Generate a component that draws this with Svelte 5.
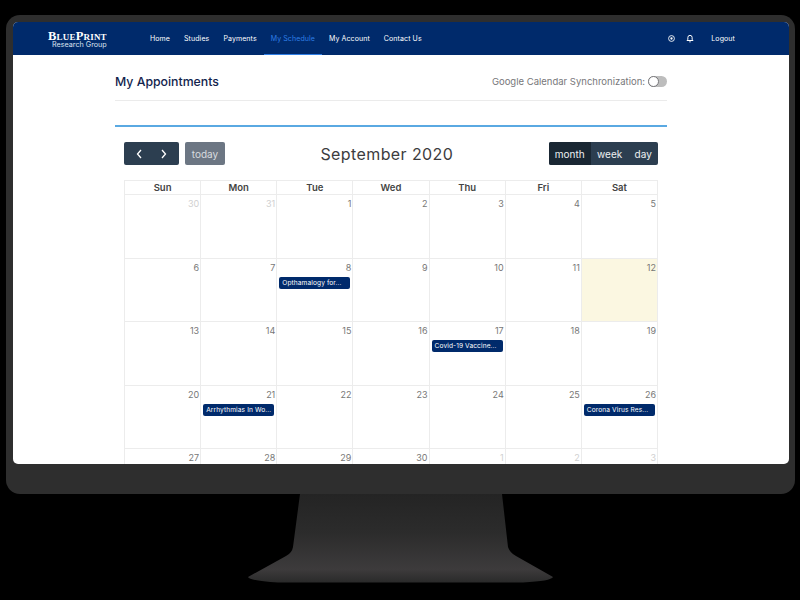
<script>
  const links = ['Home', 'Studies', 'Payments', 'My Schedule', 'My Account', 'Contact Us'];
  const days = ['Sun', 'Mon', 'Tue', 'Wed', 'Thu', 'Fri', 'Sat'];

  const events = {
    8: 'Opthamalogy for...',
    17: 'Covid-19 Vaccine...',
    21: 'Arrhythmias In Wo...',
    26: 'Corona Virus Res...'
  };

  const cells = [
    { n: 30, off: true }, { n: 31, off: true },
    ...Array.from({ length: 30 }, (_, i) => ({ n: i + 1, off: false })),
    { n: 1, off: true }, { n: 2, off: true }, { n: 3, off: true }
  ];
</script>

<div class="page">
  <div class="monitor">
    <div class="screen">
      <header class="nav">
        <div class="logo">
          <span class="logo__top">BluePrint</span>
          <span class="logo__sub">Research Group</span>
        </div>
        <nav class="links">
          {#each links as link}
            <span class="link" class:link--active={link === 'My Schedule'}>{link}</span>
          {/each}
        </nav>
        <div class="tools">
          <svg width="7" height="7" viewBox="0 0 12 12" fill="none" stroke="#fff" stroke-width="1.5">
            <circle cx="6" cy="6" r="5" />
            <circle cx="6" cy="6" r="2" fill="#fff" stroke="none" />
          </svg>
          <svg class="bell" width="8" height="9" viewBox="0 0 12 13" fill="none" stroke="#fff" stroke-width="1.5">
            <path d="M1.5 9.5h9l-1.3-1.8V5a3.2 3.2 0 0 0-6.4 0v2.7z" stroke-linejoin="round" />
            <path d="M5 11.5h2" />
          </svg>
          <span class="logout">Logout</span>
        </div>
      </header>

      <main class="content">
        <div class="head">
          <h1>My Appointments</h1>
          <div class="sync">
            <span>Google Calendar Synchronization:</span>
            <span class="toggle"><span class="toggle__knob"></span></span>
          </div>
        </div>

        <div class="calendar">
          <div class="toolbar">
            <div class="toolbar__left">
              <div class="btn btn--nav">
                <svg width="9" height="10" viewBox="0 0 9 10" fill="none" stroke="#fff" stroke-width="1.3"><path d="M6 1 2.5 5 6 9" /></svg>
                <svg width="9" height="10" viewBox="0 0 9 10" fill="none" stroke="#fff" stroke-width="1.3"><path d="M3 1l3.500 4L3 9" /></svg>
              </div>
              <div class="btn btn--today">today</div>
            </div>
            <h2>September 2020</h2>
            <div class="views">
              <span class="view view--on">month</span>
              <span class="view">week</span>
              <span class="view">day</span>
            </div>
          </div>

          <div class="grid">
            {#each days as day}
              <div class="dow">{day}</div>
            {/each}
            {#each cells as cell}
              <div class="day" class:day--today={cell.n === 12 && !cell.off}>
                <span class="num" class:num--off={cell.off}>{cell.n}</span>
                {#if !cell.off && events[cell.n]}
                  <span class="event">{events[cell.n]}</span>
                {/if}
              </div>
            {/each}
          </div>
        </div>
      </main>
    </div>
  </div>

  <svg class="stand" width="305" height="89" viewBox="0 0 305 89">
    <defs>
      <linearGradient id="standFill" x1="0" y1="0" x2="0" y2="1">
        <stop offset="0" stop-color="#242424" />
        <stop offset="0.45" stop-color="#2c2c2c" />
        <stop offset="0.85" stop-color="#3d3b3c" />
        <stop offset="1" stop-color="#2a2a2a" />
      </linearGradient>
    </defs>
    <path
      d="M52 0 L45 53 Q44 59 38 62 L0 83 Q2 87 30 88.500 L275 88.500 Q303 87 305 83 L268 62 Q262 59 260 53 L254 0 Z"
      fill="url(#standFill)"
    />
  </svg>
</div>

<style>
  :global(body) {
    margin: 0;
    background: #000;
  }

  .page {
    width: 800px;
    height: 600px;
    overflow: hidden;
    background: #000;
    box-sizing: border-box;
    padding: 15px 5px 0 6px;
    display: flex;
    flex-direction: column;
    align-items: center;
    font-family: 'Inter', 'Liberation Sans', sans-serif;
  }

  .monitor {
    width: 789px;
    height: 479px;
    flex: none;
    box-sizing: border-box;
    padding: 7px 6px 30px 7px;
    background: #2e2e2e;
    border-radius: 14px;
  }

  .screen {
    height: 442px;
    overflow: hidden;
    background: #fff;
    border-radius: 5px;
  }

  .stand {
    flex: none;
    display: block;
  }

  .nav {
    height: 33px;
    box-sizing: border-box;
    background: #002a6b;
    display: flex;
    align-items: center;
    padding-left: 35px;
    color: #fff;
    font-size: 7px;
    font-weight: 400;
    letter-spacing: 0.1px;
  }

  .logo {
    width: 95px;
    display: flex;
    flex-direction: column;
    margin-top: 1px;
  }

  .logo__top {
    font-family: 'Liberation Serif', serif;
    font-size: 12.500px;
    line-height: 10px;
    font-weight: 700;
    letter-spacing: 0.2px;
    font-variant: small-caps;
  }

  .logo__sub {
    font-size: 7.200px;
    line-height: 7px;
    font-weight: 400;
    letter-spacing: 0;
    padding-left: 4px;
    color: #dbe2ef;
  }

  .links {
    display: flex;
    height: 100%;
  }

  .link {
    display: flex;
    align-items: center;
    padding: 0 7px;
    border-bottom: 1px solid transparent;
    box-sizing: border-box;
  }

  .link--active {
    color: #2f7fe6;
    border-bottom-color: #2f7fe6;
  }

  .tools {
    margin-left: auto;
    display: flex;
    align-items: center;
    padding-right: 54px;
  }

  .bell {
    margin-left: 11px;
  }

  .logout {
    margin-left: 17px;
  }

  .content {
    width: 552px;
    margin-left: 102px;
  }

  .head {
    height: 46px;
    box-sizing: border-box;
    border-bottom: 1px solid #ebebeb;
    display: flex;
    align-items: center;
    justify-content: space-between;
    padding-top: 7px;
  }

  h1 {
    margin: 0;
    font-size: 12.300px;
    font-weight: 500;
    color: #12244d;
  }

  .sync {
    display: flex;
    align-items: center;
    gap: 3px;
    font-size: 9.500px;
    color: #77777a;
  }

  .toggle {
    width: 19px;
    height: 11px;
    box-sizing: border-box;
    border-radius: 6px;
    background: #bdbdbd;
    display: flex;
    align-items: center;
  }

  .toggle__knob {
    width: 11px;
    height: 11px;
    box-sizing: border-box;
    border: 1px solid #77777a;
    border-radius: 50%;
    background: #fff;
  }

  .calendar {
    margin-top: 24px;
    border-top: 2px solid #5aa9e2;
    padding: 15px 9px 0;
  }

  .toolbar {
    height: 23px;
    margin-bottom: 15px;
    display: flex;
    align-items: center;
    justify-content: space-between;
  }

  .toolbar__left {
    display: flex;
    gap: 6px;
  }

  .btn {
    height: 23px;
    box-sizing: border-box;
    border-radius: 2px;
    display: flex;
    align-items: center;
  }

  .btn--nav {
    width: 55px;
    background: #2c3e50;
    justify-content: space-around;
    padding: 0 4px;
  }

  .btn--today {
    width: 40px;
    background: #6c7683;
    color: #d8dbdf;
    justify-content: center;
    font-size: 10px;
  }

  h2 {
    margin: 0;
    font-size: 16px;
    font-weight: 400;
    color: #3c3c3e;
    letter-spacing: 0.4px;
  }

  .views {
    display: flex;
    height: 23px;
    border-radius: 2px;
    overflow: hidden;
    background: #2c3e50;
    color: #eef0f2;
    font-size: 10px;
  }

  .view {
    display: flex;
    align-items: center;
    padding: 0 6.200px;
  }

  .view--on {
    background: #1a2733;
  }

  .grid {
    display: grid;
    width: 534px;
    grid-template-columns: repeat(7, 1fr);
    grid-auto-rows: 63.600px;
    grid-template-rows: 14px;
    box-sizing: border-box;
    border-left: 1px solid #ececec;
    border-top: 1px solid #ececec;
  }

  .dow {
    display: flex;
    align-items: center;
    justify-content: center;
    font-size: 9.500px;
    font-weight: 600;
    color: #444;
    border-right: 1px solid #ececec;
    border-bottom: 1px solid #ececec;
  }

  .day {
    display: flex;
    flex-direction: column;
    min-width: 0;
    box-sizing: border-box;
    padding: 3px 2px 0;
    border-right: 1px solid #ececec;
    border-bottom: 1px solid #ececec;
  }

  .day--today {
    background: #fbf7e1;
  }

  .num {
    align-self: flex-end;
    margin-right: -1px;
    font-size: 9px;
    line-height: 11px;
    color: #777;
  }

  .num--off {
    color: #d0d0d0;
  }

  .event {
    margin-top: 4px;
    height: 12px;
    border-radius: 2px;
    background: #002a6b;
    color: #fff;
    font-size: 6.600px;
    font-weight: 400;
    letter-spacing: 0.1px;
    line-height: 12px;
    padding-left: 3px;
    white-space: nowrap;
    overflow: hidden;
  }
</style>
